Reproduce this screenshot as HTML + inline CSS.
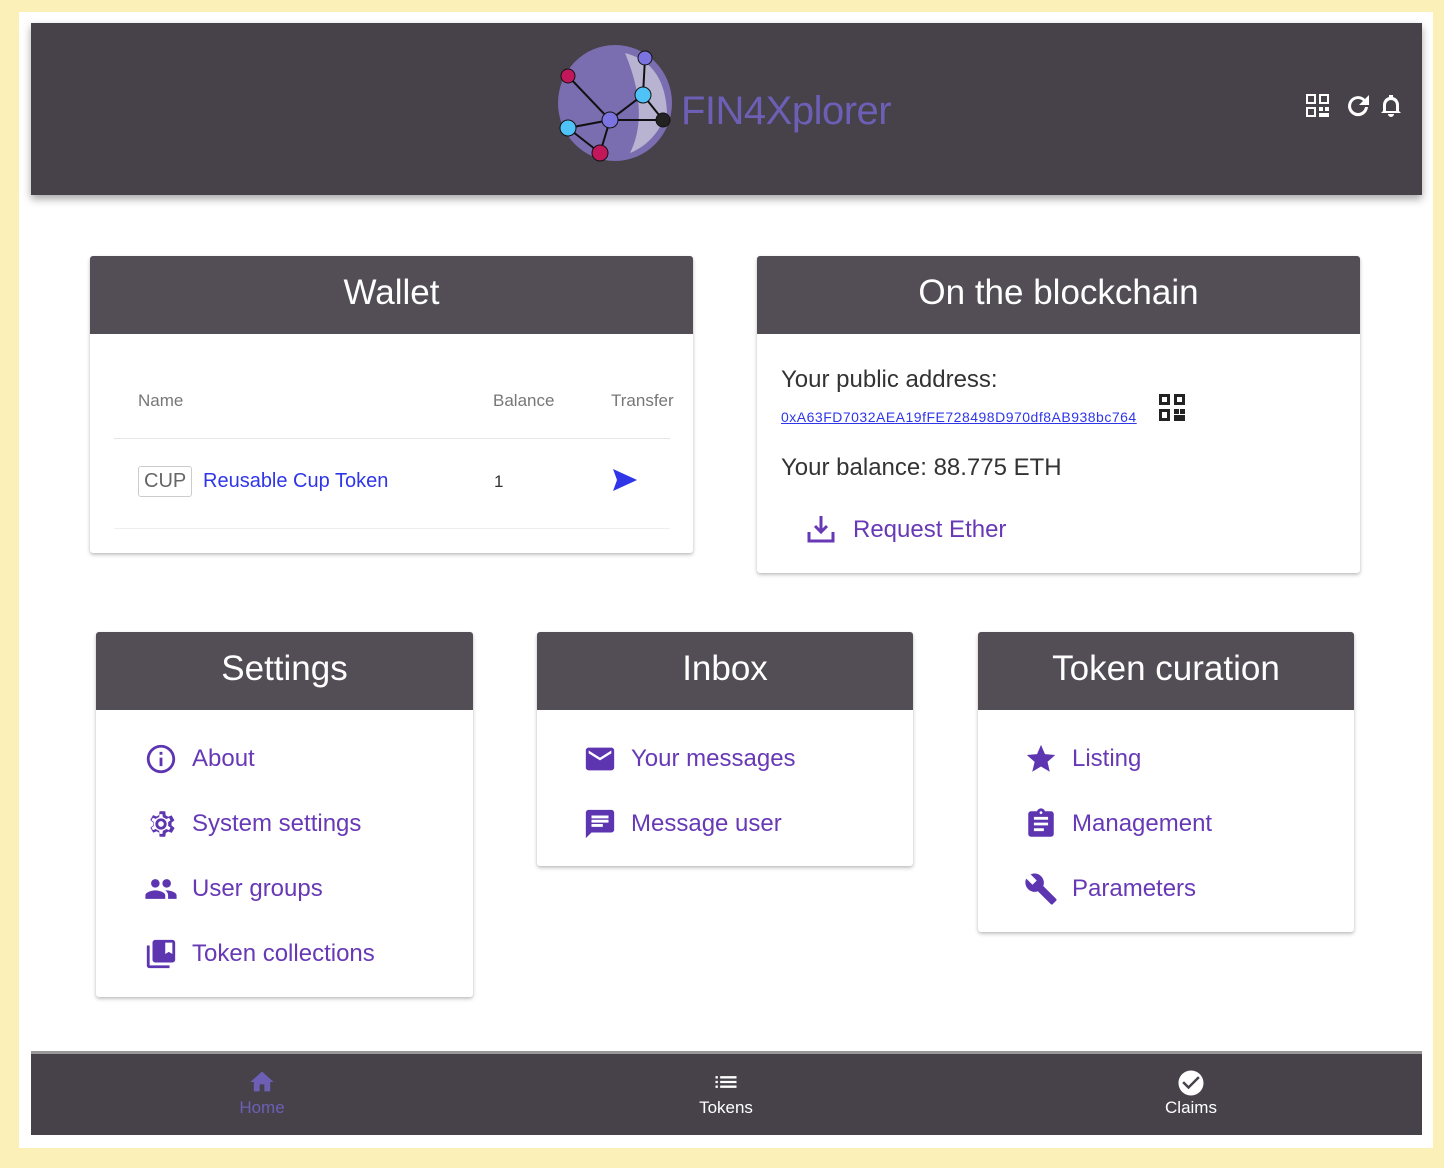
<!DOCTYPE html>
<html><head><meta charset="utf-8"><style>
*{margin:0;padding:0;box-sizing:border-box}
body{width:1444px;height:1168px;background:#faf0b8;font-family:"Liberation Sans",sans-serif;position:relative;overflow:hidden}
.inner{position:absolute;left:19px;top:12px;width:1414px;height:1136px;background:#fff}
.hdr{position:absolute;left:31px;top:23px;width:1391px;height:172px;background:#47414a;box-shadow:0 4px 8px rgba(0,0,0,.35)}
.nav{position:absolute;left:31px;top:1051px;width:1391px;height:84px;background:#47414a;border-top:3px solid #999}
.card{position:absolute;background:#fff;box-shadow:0 2px 4px rgba(0,0,0,.2),0 1px 2px rgba(0,0,0,.1);border-radius:3px;overflow:hidden}
.ch{height:78px;background:#534d56;color:#fff;font-size:35px;text-align:center;line-height:74px}
.p{color:#6739b6}
.item{position:absolute;display:flex;align-items:center;font-size:24px;color:#6739b6}
.item svg{width:34px;height:34px;margin-right:14px;fill:#5e35b1}
.navi{position:absolute;top:1068px;text-align:center;color:#fff;font-size:17px;width:120px}
</style></head><body>
<div class="inner"></div>
<div class="hdr">
<svg style="position:absolute;left:524px;top:20px" width="130" height="125" viewBox="0 0 130 125">
<ellipse cx="60" cy="60" rx="57" ry="58" fill="#7a6db0"/>
<path d="M70 10 Q110 20 112 70 Q100 100 75 110 Q95 70 70 10Z" fill="#c8c4d8" opacity=".8"/>
<g stroke="#111" stroke-width="2" fill="none"><path d="M13 33 L55 77 L45 110 L13 85 L55 77 L88 52 L90 15 M55 77 L108 77 L88 52"/></g>
<circle cx="13" cy="33" r="7" fill="#c2185b" stroke="#111"/><circle cx="90" cy="15" r="7" fill="#7b73e0" stroke="#111"/>
<circle cx="88" cy="52" r="8" fill="#4fc3f7" stroke="#111"/><circle cx="55" cy="77" r="8" fill="#7b73e0" stroke="#111"/>
<circle cx="13" cy="85" r="8" fill="#4fc3f7" stroke="#111"/><circle cx="45" cy="110" r="8" fill="#c2185b" stroke="#111"/>
<circle cx="108" cy="77" r="7" fill="#222" stroke="#111"/></svg>
<div style="position:absolute;left:650px;top:66px;font-size:40px;color:#6c5fb5;letter-spacing:-0.5px">FIN4Xplorer</div>
<svg style="position:absolute;left:1274px;top:70px" width="100" height="26" viewBox="0 0 100 26" fill="#fff">
<path d="M1 1h10v10H1zM3 3v6h6V3zM14 1h10v10H14zM16 3v6h6V3zM1 14h10v10H1zM3 16v6h6v-6zM14 14h4v4h-4zM20 14h4v4h-4zM14 20h10v4H14z"/>
<path d="M60 6a10 10 0 1 0 3 8h-3a7 7 0 1 1-2-6l-4 4h10V2z"/>
<path d="M86 24a3 3 0 0 0 3-3h-6a3 3 0 0 0 3 3zM94 18v-6a8 8 0 0 0-6-8V2h-4v2a8 8 0 0 0-6 8v6l-2 2h20zM91 18h-10v-6a5 5 0 0 1 10 0z"/></svg>
</div>

<div class="card" style="left:90px;top:256px;width:603px;height:297px">
<div class="ch">Wallet</div>
<div style="position:absolute;left:48px;top:135px;font-size:17px;color:#777">Name</div>
<div style="position:absolute;left:403px;top:135px;font-size:17px;color:#777">Balance</div>
<div style="position:absolute;left:521px;top:135px;font-size:17px;color:#777">Transfer</div>
<div style="position:absolute;left:24px;top:182px;width:556px;height:1px;background:#e6e6e6"></div>
<div style="position:absolute;left:48px;top:210px;border:1px solid #ccc;border-radius:3px;padding:3px 5px;font-size:20px;color:#666">CUP</div>
<div style="position:absolute;left:113px;top:214px;font-size:20px;color:#2f36e8">Reusable Cup Token</div>
<div style="position:absolute;left:404px;top:216px;font-size:17px;color:#333">1</div>
<svg style="position:absolute;left:523px;top:213px" width="24" height="22" viewBox="0 0 24 22"><path d="M0 0L24 11L0 22L4 11z" fill="#2f36e8"/></svg>
<div style="position:absolute;left:24px;top:272px;width:556px;height:1px;background:#eee"></div>
</div>

<div class="card" style="left:757px;top:256px;width:603px;height:317px">
<div class="ch">On the blockchain</div>
<div style="position:absolute;left:24px;top:110px;font-size:24px;color:#333">Your public address:</div>
<div style="position:absolute;left:24px;top:153px;font-size:14px;color:#2f36e8;text-decoration:underline;letter-spacing:0.5px">0xA63FD7032AEA19fFE728498D970df8AB938bc764</div>
<svg style="position:absolute;left:401px;top:137px" width="28" height="30" viewBox="0 0 28 30" fill="#222"><path d="M1 1h11v11H1zM4 4v5h5V4zM16 1h11v11H16zM19 4v5h5V4zM1 16h11v12H1zM4 19v6h5v-6zM16 16h5v5h-5zM22 16h5v5h-5zM16 22h11v6H16z"/></svg>
<div style="position:absolute;left:24px;top:198px;font-size:24px;color:#333">Your balance: 88.775 ETH</div>
<svg style="position:absolute;left:49px;top:258px" width="30" height="30" viewBox="0 0 30 30" fill="none" stroke="#6739b6" stroke-width="3"><path d="M15 2v16M9 12l6 6 6-6M3 18v9h24v-9"/></svg>
<div style="position:absolute;left:96px;top:260px;font-size:24px" class="p">Request Ether</div>
</div>

<div class="card" style="left:96px;top:632px;width:377px;height:365px">
<div class="ch">Settings</div>
<div class="item" style="left:48px;top:110px"><svg viewBox="0 0 24 24"><path d="M11 7h2v2h-2zm0 4h2v6h-2zm1-9C6.5 2 2 6.5 2 12s4.5 10 10 10 10-4.5 10-10S17.5 2 12 2zm0 18c-4.4 0-8-3.6-8-8s3.6-8 8-8 8 3.6 8 8-3.6 8-8 8z"/></svg>About</div>
<div class="item" style="left:48px;top:175px"><svg viewBox="0 0 24 24"><path d="M19.4 13a7.6 7.6 0 0 0 0-2l2.1-1.6-2-3.5-2.5 1a7.4 7.4 0 0 0-1.7-1L15 3h-4l-.4 2.7a7.4 7.4 0 0 0-1.7 1l-2.5-1-2 3.5L6.6 11a7.6 7.6 0 0 0 0 2l-2.1 1.6 2 3.5 2.5-1a7.4 7.4 0 0 0 1.7 1L11 21h4l.4-2.7a7.4 7.4 0 0 0 1.7-1l2.5 1 2-3.5zM13 19h-2l-.3-2.2-.8-.3-1.6-1-2 .8-1-1.7 1.7-1.3-.1-1.3.1-1.3L5.3 9.3l1-1.7 2 .8 1.6-1 .8-.3L11 5h2l.3 2.2.8.3 1.6 1 2-.8 1 1.7-1.7 1.3.1 1.3-.1 1.3 1.7 1.3-1 1.7-2-.8-1.6 1-.8.3zM12 8a4 4 0 1 0 0 8 4 4 0 0 0 0-8zm0 6a2 2 0 1 1 0-4 2 2 0 0 1 0 4z"/></svg>System settings</div>
<div class="item" style="left:48px;top:240px"><svg viewBox="0 0 24 24"><path d="M16 11c1.7 0 3-1.3 3-3s-1.3-3-3-3-3 1.3-3 3 1.3 3 3 3zm-8 0c1.7 0 3-1.3 3-3S9.7 5 8 5 5 6.3 5 8s1.3 3 3 3zm0 2c-2.3 0-7 1.2-7 3.5V19h14v-2.5C15 14.2 10.3 13 8 13zm8 0h-1c1.2.8 2 2 2 3.5V19h6v-2.5c0-2.3-4.7-3.5-7-3.5z"/></svg>User groups</div>
<div class="item" style="left:48px;top:305px"><svg viewBox="0 0 24 24"><path d="M4 6H2v14c0 1.1.9 2 2 2h14v-2H4zm16-4H8c-1.1 0-2 .9-2 2v12c0 1.1.9 2 2 2h12c1.1 0 2-.9 2-2V4c0-1.1-.9-2-2-2zm0 10-2.5-1.5L15 12V4h5z"/></svg>Token collections</div>
</div>

<div class="card" style="left:537px;top:632px;width:376px;height:234px">
<div class="ch">Inbox</div>
<div class="item" style="left:46px;top:110px"><svg viewBox="0 0 24 24"><path d="M20 4H4c-1.1 0-2 .9-2 2v12c0 1.1.9 2 2 2h16c1.1 0 2-.9 2-2V6c0-1.1-.9-2-2-2zm0 4-8 5-8-5V6l8 5 8-5z"/></svg>Your messages</div>
<div class="item" style="left:46px;top:175px"><svg viewBox="0 0 24 24"><path d="M20 2H4c-1.1 0-2 .9-2 2v18l4-4h14c1.1 0 2-.9 2-2V4c0-1.1-.9-2-2-2zM6 9h12v2H6zm8 5H6v-2h8zm4-6H6V6h12z"/></svg>Message user</div>
</div>

<div class="card" style="left:978px;top:632px;width:376px;height:300px">
<div class="ch">Token curation</div>
<div class="item" style="left:46px;top:110px"><svg viewBox="0 0 24 24"><path d="M12 17.3 18.2 21l-1.6-7L22 9.2l-7.2-.6L12 2 9.2 8.6 2 9.2 7.5 14l-1.7 7z"/></svg>Listing</div>
<div class="item" style="left:46px;top:175px"><svg viewBox="0 0 24 24"><path d="M19 3h-4.2C14.4 1.8 13.3 1 12 1s-2.4.8-2.8 2H5c-1.1 0-2 .9-2 2v14c0 1.1.9 2 2 2h14c1.1 0 2-.9 2-2V5c0-1.1-.9-2-2-2zm-7 0c.6 0 1 .4 1 1s-.4 1-1 1-1-.4-1-1 .4-1 1-1zm2 14H7v-2h7zm3-4H7v-2h10zm0-4H7V7h10z"/></svg>Management</div>
<div class="item" style="left:46px;top:240px"><svg viewBox="0 0 24 24"><path d="M22.7 19 13.6 9.9c.9-2.3.4-5-1.5-6.9-2-2-5-2.4-7.4-1.3L9 6 6 9 1.6 4.7C.4 7.1.9 10.1 2.9 12.1c1.9 1.9 4.6 2.4 6.9 1.5l9.1 9.1c.4.4 1 .4 1.4 0l2.3-2.3c.5-.4.5-1.1.1-1.4z"/></svg>Parameters</div>
</div>

<div class="nav"></div>
<div class="navi" style="left:202px;color:#6c5fb5"><svg width="28" height="28" viewBox="0 0 24 24" fill="#6c5fb5"><path d="M10 20v-6h4v6h5v-8h3L12 3 2 12h3v8z"/></svg><div style="margin-top:-3px">Home</div></div>
<div class="navi" style="left:666px"><svg width="30" height="28" viewBox="0 0 24 24" fill="#fff"><path d="M3 13h2v-2H3zm0 4h2v-2H3zm0-8h2V7H3zm4 4h14v-2H7zm0 4h14v-2H7zM7 7v2h14V7z"/></svg><div style="margin-top:-3px">Tokens</div></div>
<div class="navi" style="left:1131px"><svg width="32" height="30" viewBox="0 0 24 24" fill="#fff"><path d="M12 2C6.5 2 2 6.5 2 12s4.5 10 10 10 10-4.5 10-10S17.5 2 12 2zm-2 15-5-5 1.4-1.4 3.6 3.6 7.6-7.6L19 8z"/></svg><div style="margin-top:-5px">Claims</div></div>
</body></html>
